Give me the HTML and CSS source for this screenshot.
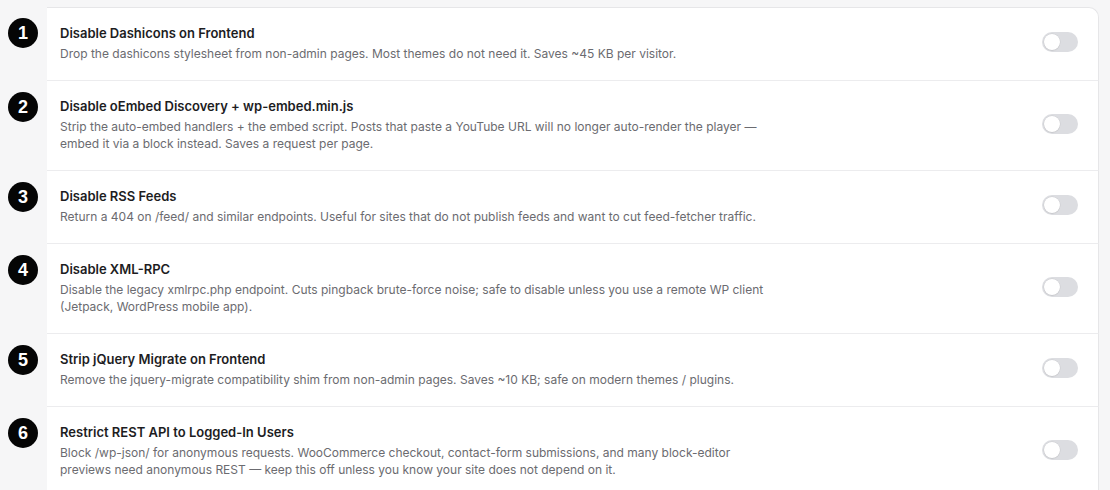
FILE: index.html
```html
<!DOCTYPE html>
<html lang="en">
<head>
<meta charset="utf-8">
<title>Performance tweaks</title>
<link rel="stylesheet" href="styles.css">
</head>
<body>
<main class="tweaks">
  <div class="tweak-row">
    <div class="step"><span class="step-badge">1</span></div>
    <div class="tweak tweak-first">
      <div class="tweak-text">
        <div class="tweak-title">Disable Dashicons on Frontend</div>
        <p class="tweak-desc">Drop the dashicons stylesheet from non-admin pages. Most themes do not need it. Saves ~45 KB per visitor.</p>
      </div>
      <label class="switch"><input type="checkbox"><span class="switch-track"></span></label>
    </div>
  </div>
  <div class="tweak-row">
    <div class="step"><span class="step-badge">2</span></div>
    <div class="tweak">
      <div class="tweak-text">
        <div class="tweak-title">Disable oEmbed Discovery + wp-embed.min.js</div>
        <p class="tweak-desc">Strip the auto-embed handlers + the embed script. Posts that paste a YouTube URL will no longer auto-render the player — embed it via a block instead. Saves a request per page.</p>
      </div>
      <label class="switch"><input type="checkbox"><span class="switch-track"></span></label>
    </div>
  </div>
  <div class="tweak-row">
    <div class="step"><span class="step-badge">3</span></div>
    <div class="tweak">
      <div class="tweak-text">
        <div class="tweak-title">Disable RSS Feeds</div>
        <p class="tweak-desc tweak-desc-wide">Return a 404 on /feed/ and similar endpoints. Useful for sites that do not publish feeds and want to cut feed-fetcher traffic.</p>
      </div>
      <label class="switch"><input type="checkbox"><span class="switch-track"></span></label>
    </div>
  </div>
  <div class="tweak-row">
    <div class="step"><span class="step-badge">4</span></div>
    <div class="tweak">
      <div class="tweak-text">
        <div class="tweak-title">Disable XML-RPC</div>
        <p class="tweak-desc">Disable the legacy xmlrpc.php endpoint. Cuts pingback brute-force noise; safe to disable unless you use a remote WP client (Jetpack, WordPress mobile app).</p>
      </div>
      <label class="switch"><input type="checkbox"><span class="switch-track"></span></label>
    </div>
  </div>
  <div class="tweak-row">
    <div class="step"><span class="step-badge">5</span></div>
    <div class="tweak">
      <div class="tweak-text">
        <div class="tweak-title">Strip jQuery Migrate on Frontend</div>
        <p class="tweak-desc">Remove the jquery-migrate compatibility shim from non-admin pages. Saves ~10 KB; safe on modern themes / plugins.</p>
      </div>
      <label class="switch"><input type="checkbox"><span class="switch-track"></span></label>
    </div>
  </div>
  <div class="tweak-row">
    <div class="step"><span class="step-badge">6</span></div>
    <div class="tweak">
      <div class="tweak-text">
        <div class="tweak-title">Restrict REST API to Logged-In Users</div>
        <p class="tweak-desc">Block /wp-json/ for anonymous requests. WooCommerce checkout, contact-form submissions, and many block-editor previews need anonymous REST — keep this off unless you know your site does not depend on it.</p>
      </div>
      <label class="switch"><input type="checkbox"><span class="switch-track"></span></label>
    </div>
  </div>
</main>
</body>
</html>
```

FILE: styles.css
```css
* { box-sizing: border-box; }

html, body {
  margin: 0;
  padding: 0;
  background: #f6f6f7;
}

body {
  font-family: Inter, "Helvetica Neue", Arial, sans-serif;
  color: #1d1d1f;
  -webkit-font-smoothing: antialiased;
}

.tweaks {
  display: flex;
  flex-direction: column;
  padding-top: 7px;
  width: 1099px;
}

.tweak-row {
  display: flex;
  align-items: stretch;
}

/* numbered markers in the gutter left of the list */
.step {
  width: 47px;
  flex: 0 0 47px;
  padding-top: 11px;
  display: flex;
  justify-content: center;
}

.step-badge {
  width: 30px;
  height: 30px;
  border-radius: 50%;
  background: #050505;
  color: #fff;
  font-family: "Liberation Sans", Arial, sans-serif;
  font-weight: 700;
  font-size: 18px;
  line-height: 30px;
  text-align: center;
  margin-left: -1px;
}

.tweak {
  flex: 1;
  display: flex;
  align-items: center;
  justify-content: space-between;
  gap: 24px;
  background: #fff;
  border-right: 1px solid #e6e6e8;
  border-bottom: 1px solid #ececee;
  padding: 16px 20px 18px 13px;
}

.tweak-first {
  border-top: 1px solid #e6e6e8;
  border-top-right-radius: 10px;
}

.tweak-text {
  flex: 1;
  min-width: 0;
}

.tweak-title {
  font-size: 13px;
  line-height: 18px;
  font-weight: 600;
  color: #1d1d1f;
  margin-bottom: 3px;
}

.tweak-desc {
  margin: 0;
  max-width: 710px;
  font-size: 12px;
  line-height: 17px;
  color: #6b6b70;
}

.tweak-desc-wide {
  max-width: none;
}

.switch {
  position: relative;
  display: inline-block;
  width: 36px;
  height: 20px;
  flex: 0 0 36px;
  margin-top: -2px;
}

.switch input {
  opacity: 0;
  width: 0;
  height: 0;
  position: absolute;
}

.switch-track {
  position: absolute;
  inset: 0;
  border-radius: 10px;
  background: #dcdde1;
}

.switch-track::before {
  content: "";
  position: absolute;
  top: 2px;
  left: 2px;
  width: 16px;
  height: 16px;
  border-radius: 50%;
  background: #fff;
  box-shadow: 0 0 0 0.5px rgba(0,0,0,0.08), 0 1px 1px rgba(0,0,0,0.06);
}
```
